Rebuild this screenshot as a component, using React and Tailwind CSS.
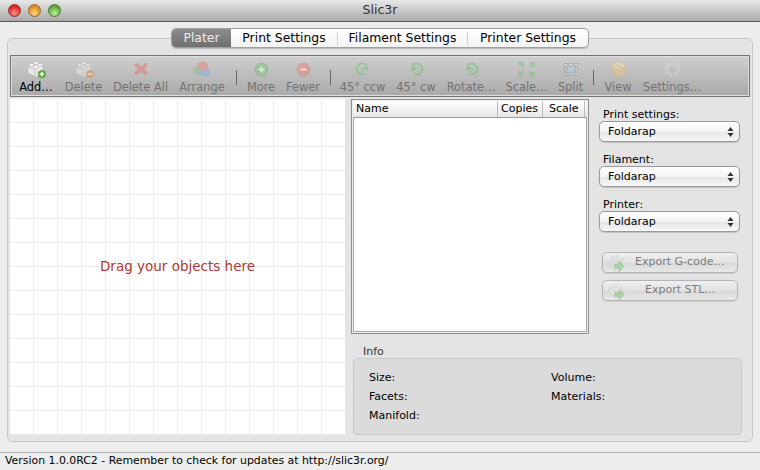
const Brick = ({ badge, w = 22 }) => (
  <svg width={w} height={(w * 22) / 24} viewBox="0 0 24 22">
    <path d="M3 8l9-4 8 3.500v8l-8 4.500-9-4.500z" fill="#e9e9e9" stroke="#aaa" strokeWidth="0.8" />
    <path d="M3 8l8 4v7.500" fill="none" stroke="#bbb" strokeWidth="0.8" />
    <ellipse cx="7" cy="6.500" rx="2.600" ry="1.800" fill="#fafafa" stroke="#aaa" strokeWidth="0.6" />
    <ellipse cx="12" cy="4.500" rx="2.600" ry="1.800" fill="#fafafa" stroke="#aaa" strokeWidth="0.6" />
    <ellipse cx="12" cy="8.500" rx="2.600" ry="1.800" fill="#fafafa" stroke="#aaa" strokeWidth="0.6" />
    <ellipse cx="16.500" cy="6.500" rx="2.600" ry="1.800" fill="#fafafa" stroke="#aaa" strokeWidth="0.6" />
    {badge === "add" && (
      <>
        <circle cx="18.500" cy="16.500" r="4.500" fill="#5da33a" />
        <path d="M18.500 14v5M16 16.500h5" stroke="#fff" strokeWidth="1.500" />
      </>
    )}
    {badge === "del" && (
      <>
        <circle cx="18.500" cy="16.500" r="4.500" fill="#e0913c" />
        <path d="M16 16.500h5" stroke="#fff" strokeWidth="1.500" />
      </>
    )}
  </svg>
);

const Cross = () => (
  <svg width="16" height="16" viewBox="0 0 24 22">
    <path d="M5 2l7 5.500L19 2l3 3-6 6 6 6-3 3-7-5.500L5 20l-3-3 6-6-6-6z" fill="#ee6a62" stroke="#d9544c" strokeWidth="0.5" />
  </svg>
);

const Arrange = () => (
  <svg width="20" height="18" viewBox="0 0 26 22">
    <path d="M2 9l6-3 5 3v6l-5 3-6-3z" fill="#86c48a" stroke="#6aa66e" strokeWidth="0.5" />
    <path d="M11 12l6-3 6 3v6l-6 3-6-3z" fill="#7fb0e2" stroke="#6593c4" strokeWidth="0.5" />
    <path d="M8 4l6-3 6 3v6l-6 3-6-3z" fill="#ee7f7a" stroke="#cc625e" strokeWidth="0.5" />
  </svg>
);

const Circle = ({ color, ring, plus }) => (
  <svg width="15" height="15" viewBox="0 0 22 22">
    <circle cx="11" cy="11" r="9.500" fill={color} stroke={ring} strokeWidth="1" />
    <path d={plus ? "M11 6.500v9M6.500 11h9" : "M6.500 11h9"} stroke="#fff" strokeWidth="2.800" />
  </svg>
);

const Rotate = ({ flip }) => (
  <svg width="15" height="15" viewBox="0 0 22 22" className={flip ? "-scale-x-100" : ""}>
    <path d="M5 5.500a8 8 0 1 1 1.500 11" fill="none" stroke="#67c46a" strokeWidth="3" />
    <path d="M1 9l9-1-4 7z" fill="#67c46a" transform="rotate(150 6 10)" />
    <circle cx="11" cy="11" r="2.500" fill="none" stroke="#67c46a" strokeWidth="1.300" />
  </svg>
);

const Scale = () => (
  <svg width="17" height="16" viewBox="0 0 24 22" fill="#79c97d" stroke="#5aa95e" strokeWidth="0.5">
    <path d="M1 1h7l-2 2 3 3-2 2-3-3-2 2zM23 1v7l-2-2-3 3-2-2 3-3-2-2zM1 21v-7l2 2 3-3 2 2-3 3 2 2zM23 21h-7l2-2-3-3 2-2 3 3 2-2z" />
  </svg>
);

const Split = () => (
  <svg width="16" height="15" viewBox="0 0 24 22">
    <rect x="4" y="4" width="16" height="14" fill="#a9c6ee" />
    <path d="M4 11h16M12 4v14" stroke="#c3d7f3" strokeWidth="1" />
    {[[2, 2], [10, 2], [18, 2], [2, 9], [18, 9], [2, 16], [10, 16], [18, 16]].map(([x, y]) => (
      <rect key={`${x}-${y}`} x={x} y={y} width="4" height="4" fill="#fff" stroke="#555" strokeWidth="0.8" />
    ))}
  </svg>
);

const Box = () => (
  <svg width="17" height="17" viewBox="0 0 24 24">
    <path d="M12 1l10 5.500v11L12 23 2 17.500v-11z" fill="#eec678" stroke="#d8a850" strokeWidth="0.6" />
    <path d="M2 6.500L12 12l10-5.500L12 1z" fill="#f7e3b4" />
    <path d="M12 12v11" stroke="#e8d3a0" strokeWidth="1" />
    <path d="M6 4l10 5.500v3" fill="none" stroke="#e0b868" strokeWidth="1.500" />
  </svg>
);

const Gear = ({ size = 17 }) => (
  <svg width={size} height={size} viewBox="0 0 24 24" fill="none">
    <circle cx="12" cy="12" r="7" stroke="#d5d5d5" strokeWidth="3" />
    <circle cx="12" cy="12" r="10" stroke="#d5d5d5" strokeWidth="3.500" strokeDasharray="3.500 4.350" />
    <circle cx="12" cy="12" r="3" stroke="#aaa" strokeWidth="0.8" />
  </svg>
);

const tools = [
  { label: "Add…", w: "w-[36px]", icon: <Brick badge="add" />, on: true },
  { label: "Delete", w: "w-[37px]", icon: <Brick badge="del" /> },
  { label: "Delete All", w: "w-[55px]", icon: <Cross /> },
  { label: "Arrange", w: "w-[46px]", icon: <Arrange /> },
  { sep: "-mx-[0.5px]" },
  { label: "More", w: "w-[28px]", icon: <Circle color="#7cc576" ring="#5fa65a" plus /> },
  { label: "Fewer", w: "w-[34px]", icon: <Circle color="#ee7f74" ring="#d2655b" /> },
  { sep: "-mx-[1.5px]" },
  { label: "45° ccw", w: "w-[45px]", icon: <Rotate flip /> },
  { label: "45° cw", w: "w-[40px]", icon: <Rotate /> },
  { label: "Rotate…", w: "w-[48px]", icon: <Rotate /> },
  { label: "Scale…", w: "w-[41px]", icon: <Scale /> },
  { label: "Split", w: "w-[25px]", icon: <Split /> },
  { sep: "-mx-[1px]" },
  { label: "View", w: "w-[28px]", icon: <Box /> },
  { label: "Settings…", w: "w-[58px]", icon: <Gear /> },
];

const Tool = ({ label, icon, on, w }) => (
  <div className={`flex flex-col items-center ${w}`}>
    <div className={`h-[20px] mt-[2px] flex items-center justify-center ${on ? "" : "opacity-50"}`}>{icon}</div>
    <span className={`mt-[1px] text-[11.400px] leading-[15px] whitespace-nowrap ${on ? "text-black" : "text-[#737373]"}`}>{label}</span>
  </div>
);

const Select = ({ label }) => (
  <div className="flex flex-col">
    <span className="text-[11px] leading-[15px] text-black pl-[4px]">{label}</span>
    <div className="-mt-[1px] h-[21px] w-[141px] rounded-[5px] border border-[#9a9a9a] bg-[linear-gradient(#ffffff,#f4f4f4_50%,#e6e6e6_55%,#f8f8f8)] shadow-[0_1px_1px_rgba(0,0,0,0.15)] flex items-center justify-between pl-[8px] pr-[5px]">
      <span className="text-[11px] text-black pt-px">Foldarap</span>
      <svg width="7" height="12" viewBox="0 0 7 12" fill="#333">
        <path d="M3.500 1l3 4h-6zM3.500 11l3-4h-6z" />
      </svg>
    </div>
  </div>
);

const ExportBtn = ({ label, icon, pad }) => (
  <div className="h-[21px] w-[136px] ml-[3px] rounded-[5px] border border-[#b5b5b5] bg-[linear-gradient(#f0f0f0,#e2e2e2_50%,#d9d9d9_55%,#e8e8e8)] shadow-[0_1px_1px_rgba(0,0,0,0.1)] flex items-center pl-[4px]">
    <div className="relative w-[18px] h-[18px] opacity-60">
      {icon}
      <svg className="absolute left-[7px] top-[7px]" width="11" height="11" viewBox="0 0 13 13">
        <path d="M1 4h5V0l6 6.500L6 13V9H1z" fill="#86c97f" stroke="#69a863" strokeWidth="0.5" />
      </svg>
    </div>
    <span className={`text-[11px] text-[#7c7c7c] whitespace-nowrap ${pad}`}>{label}</span>
  </div>
);

export default function App() {
  return (
    <div className="w-[760px] h-[470px] overflow-hidden bg-[#ededed] flex flex-col font-['DejaVu_Sans','Liberation_Sans',sans-serif]">
      {/* title bar */}
      <div className="relative h-[22px] shrink-0 border-b border-[#5c5c5c] bg-[linear-gradient(#e8e8e8,#a9a9a9)] rounded-t-[4px] flex items-center justify-center">
        <div className="absolute left-[8px] top-[4px] flex gap-[7px]">
          <div className="size-[13px] rounded-full border border-[#8e3030] bg-[radial-gradient(circle_at_50%_75%,#ff8f85,#d9241f_70%)]" />
          <div className="size-[13px] rounded-full border border-[#96682a] bg-[radial-gradient(circle_at_50%_75%,#ffd97c,#d98a1c_70%)]" />
          <div className="size-[13px] rounded-full border border-[#4b7a33] bg-[radial-gradient(circle_at_50%_75%,#bdf09a,#58a632_70%)]" />
        </div>
        <span className="text-[12.500px] text-[#333]">Slic3r</span>
      </div>

      {/* tabs */}
      <div className="mt-[6px] flex flex-col items-center">
        <div className="relative z-10 flex h-[20px] w-[418px] rounded-[5px] border border-[#a0a0a0] bg-[linear-gradient(#ffffff,#f3f3f3)] shadow-[0_1px_1px_rgba(0,0,0,0.2)] text-[12.400px] text-black">
          <div className="w-[59px] rounded-l-[4px] bg-[linear-gradient(#8d8d8d,#6f6f6f)] text-[#ececec] flex items-center justify-center">Plater</div>
          <div className="w-[106px] flex items-center justify-center">Print Settings</div>
          <div className="w-px h-[13px] self-center bg-[#d0d0d0]" />
          <div className="w-[129px] flex items-center justify-center">Filament Settings</div>
          <div className="w-px h-[13px] self-center bg-[#d0d0d0]" />
          <div className="flex-1 flex items-center justify-center">Printer Settings</div>
        </div>
      </div>

      <div className="mx-[7px] mt-[-10px] h-[404px] rounded-[5px] border border-[#c6c6c6] bg-[#e4e4e4] pt-[16px] px-[2px] flex flex-col">
        {/* toolbar */}
        <div className="h-[42px] shrink-0 border border-[#737373] bg-[linear-gradient(#cfcfcf,#a9a9a9)] shadow-[inset_0_0_0_1px_#dedede] flex items-center gap-[11px] pl-[7px]">
          {tools.map((t, i) =>
            t.sep ? (
              <div key={i} className={`w-px h-[15px] bg-[#666] mt-[2px] ${t.sep}`} />
            ) : (
              <Tool key={i} {...t} />
            ),
          )}
        </div>

        <div className="flex flex-1 min-h-0">
          {/* plater canvas */}
          <div className="w-[335px] h-[337px] mt-[1px] bg-white bg-[linear-gradient(#ececec_1px,transparent_1px),linear-gradient(90deg,#ececec_1px,transparent_1px)] bg-[size:24px_24px] bg-[position:23px_0] flex items-center justify-center">
            <span className="text-[13.500px] text-[#b03a33]">Drag your objects here</span>
          </div>

          <div className="ml-[6px] flex flex-col">
            <div className="flex">
              {/* object list */}
              <div className="w-[238px] mt-[2px] h-[235px] border border-[#8f8f8f] p-px bg-[#ededed] flex flex-col">
                <div className="h-[17px] shrink-0 flex bg-[linear-gradient(#ffffff,#e6e6e6)] border-b border-[#999] text-[11px] text-black leading-[16px]">
                  <div className="flex-1 pl-[3px]">Name</div>
                  <div className="w-[45px] pl-[3px] border-l border-[#bbb]">Copies</div>
                  <div className="w-[42px] pl-[6px] border-l border-[#bbb]">Scale</div>
                  <div className="w-[3px] border-l border-[#bbb]" />
                </div>
                <div className="flex-1 bg-white border border-t-0 border-[#a8a8a8]" />
              </div>

              {/* presets */}
              <div className="ml-[10px] mt-[10px] flex flex-col gap-[10px]">
                <Select label="Print settings:" />
                <Select label="Filament:" />
                <Select label="Printer:" />
                <div className="mt-[10px] flex flex-col gap-[7px]">
                  <ExportBtn label="Export G-code…" icon={<Gear size={18} />} pad="pl-[10px]" />
                  <ExportBtn label="Export STL…" icon={<Brick w={18} />} pad="pl-[20px]" />
                </div>
              </div>
            </div>

            {/* info */}
            <div className="mt-[11px] ml-[12px] text-[11px] leading-[14px] text-[#333]">Info</div>
            <div className="-mt-[1px] ml-[2px] w-[389px] h-[77px] rounded-[4px] border border-[#c9c9c9] bg-[#dbdbdb] grid grid-cols-[182px_1fr] auto-rows-[19px] pl-[15px] pt-[9px] text-[11px] leading-[19px] text-black">
              <div>Size:</div>
              <div>Volume:</div>
              <div>Facets:</div>
              <div>Materials:</div>
              <div>Manifold:</div>
            </div>
          </div>
        </div>
      </div>

      {/* status bar */}
      <div className="mt-[10px] flex-1 border-t border-[#b5b5b5] bg-[#eeeeee] pl-[5px] text-[10.900px] leading-[16px] text-black whitespace-nowrap">
        Version 1.0.0RC2 - Remember to check for updates at http://slic3r.org/
      </div>
    </div>
  );
}
